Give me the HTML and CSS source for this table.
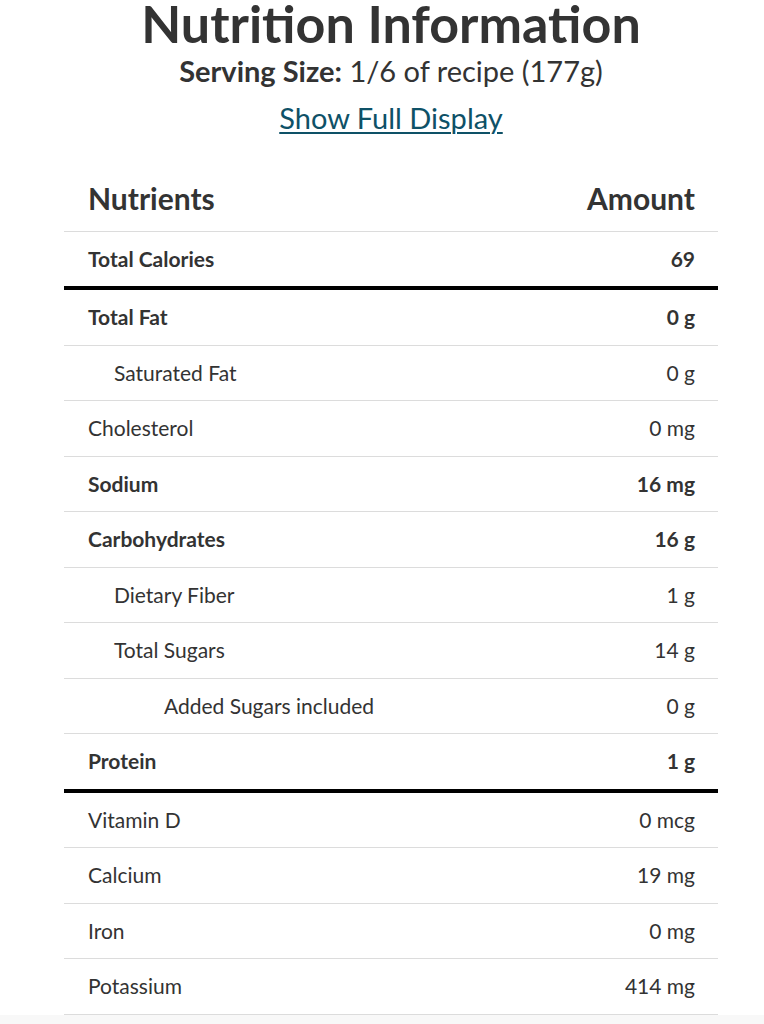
FILE: index.html
```html
<!DOCTYPE html>
<html lang="en">
<head>
    <meta charset="UTF-8">
    <meta name="viewport" content="width=device-width, initial-scale=1.0">
    <title>Nutrition Information</title>
    <link rel="stylesheet" href="styles.css">
</head>
<body>
  <div class="page">
    <div class="nutrition">
      <h1 class="title">Nutrition Information</h1>
      <p class="serving"><b>Serving Size:</b> 1/6 of recipe (177g)</p>
      <a class="full-link" href="#">Show Full Display</a>

      <div class="facts">
        <div class="row head">
          <span>Nutrients</span>
          <span>Amount</span>
        </div>
        <div class="row strong thick">
          <span>Total Calories</span>
          <span>69</span>
        </div>
        <div class="row strong">
          <span>Total Fat</span>
          <span>0 g</span>
        </div>
        <div class="row sub">
          <span>Saturated Fat</span>
          <span>0 g</span>
        </div>
        <div class="row">
          <span>Cholesterol</span>
          <span>0 mg</span>
        </div>
        <div class="row strong">
          <span>Sodium</span>
          <span>16 mg</span>
        </div>
        <div class="row strong">
          <span>Carbohydrates</span>
          <span>16 g</span>
        </div>
        <div class="row sub">
          <span>Dietary Fiber</span>
          <span>1 g</span>
        </div>
        <div class="row sub">
          <span>Total Sugars</span>
          <span>14 g</span>
        </div>
        <div class="row subsub">
          <span>Added Sugars included</span>
          <span>0 g</span>
        </div>
        <div class="row strong thick">
          <span>Protein</span>
          <span>1 g</span>
        </div>
        <div class="row">
          <span>Vitamin D</span>
          <span>0 mcg</span>
        </div>
        <div class="row">
          <span>Calcium</span>
          <span>19 mg</span>
        </div>
        <div class="row">
          <span>Iron</span>
          <span>0 mg</span>
        </div>
        <div class="row">
          <span>Potassium</span>
          <span>414 mg</span>
        </div>
      </div>
    </div>
  </div>
</body>
</html>
```

FILE: styles.css
```css
* {
  margin: 0;
  padding: 0;
  box-sizing: border-box;
}
html, body {
  background-color: #f8f8f8;
}
body {
  font-family: Lato, "Open Sans", sans-serif;
  color: #333333;
}
.page {
  background-color: #ffffff;
  padding-left: 64px;
}
.nutrition {
  width: 654px;
  text-align: center;
}
.title {
  font-size: 52px;
  font-weight: 700;
  line-height: 46px;
}
.serving {
  margin-top: 8px;
  font-size: 29px;
  line-height: 34px;
}
.full-link {
  display: inline-block;
  margin-top: 13px;
  font-size: 29px;
  line-height: 34px;
  color: #0e5167;
  text-decoration: underline;
  text-underline-offset: 3px;
  text-decoration-thickness: 2px;
}
.facts {
  margin-top: 47px;
  text-align: left;
}
.row {
  display: flex;
  justify-content: space-between;
  align-items: center;
  height: 55.5px;
  padding: 0 23px 0 24px;
  border-bottom: 1px solid #dcdcdc;
  font-size: 21px;
  line-height: 24px;
}
.row.head {
  height: auto;
  align-items: flex-end;
  padding-bottom: 16.5px;
  font-size: 30px;
  font-weight: 700;
  line-height: 32px;
}
.row.strong {
  font-weight: 700;
}
.row.thick {
  height: 58.5px;
  border-bottom: 4px solid #000000;
}
.row.sub {
  padding-left: 50px;
}
.row.subsub {
  padding-left: 100px;
}
```
